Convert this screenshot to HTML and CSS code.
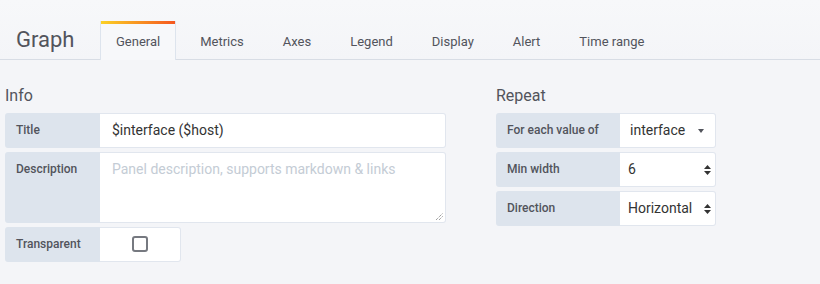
FILE: index.html
```html
<!DOCTYPE html>
<html lang="en">
<head>
    <meta charset="UTF-8">
    <title>Graph - General</title>
    <link rel="stylesheet" href="styles.css">
</head>
<body>
    <div class="edit-header">
        <div class="edit-title">Graph</div>
        <ul class="tabs">
            <li class="tab active">General</li>
            <li class="tab">Metrics</li>
            <li class="tab">Axes</li>
            <li class="tab">Legend</li>
            <li class="tab">Display</li>
            <li class="tab">Alert</li>
            <li class="tab">Time range</li>
        </ul>
    </div>

    <div class="edit-body">
        <div class="section info">
            <h5 class="section-heading">Info</h5>
            <div class="form-row">
                <label class="form-label">Title</label>
                <div class="form-input">$interface ($host)</div>
            </div>
            <div class="form-row">
                <label class="form-label">Description</label>
                <div class="form-input textarea">
                    <span class="placeholder">Panel description, supports markdown &amp; links</span>
                    <svg class="resize" width="8" height="8" viewBox="0 0 8 8">
                        <path d="M1 8 L8 1 M4 8 L8 4" stroke="#777" stroke-width="1" stroke-dasharray="1 1"/>
                    </svg>
                </div>
            </div>
            <div class="form-row">
                <label class="form-label">Transparent</label>
                <div class="form-input check-cell"><span class="checkbox"></span></div>
            </div>
        </div>

        <div class="section repeat">
            <h5 class="section-heading">Repeat</h5>
            <div class="form-row">
                <label class="form-label">For each value of</label>
                <div class="form-input select first">interface <span class="caret"></span></div>
            </div>
            <div class="form-row">
                <label class="form-label">Min width</label>
                <div class="form-input select spin">6
                    <svg class="updown" width="7" height="12" viewBox="0 0 7 12"><path d="M3.5 1 L7 5 L0 5 Z M0 7 L7 7 L3.5 11 Z" fill="#333"/></svg>
                </div>
            </div>
            <div class="form-row">
                <label class="form-label">Direction</label>
                <div class="form-input select spin">Horizontal
                    <svg class="updown" width="7" height="12" viewBox="0 0 7 12"><path d="M3.5 1 L7 5 L0 5 Z M0 7 L7 7 L3.5 11 Z" fill="#333"/></svg>
                </div>
            </div>
        </div>
    </div>
</body>
</html>
```

FILE: styles.css
```css
body {
    margin: 0;
    font-family: Roboto, "Liberation Sans", sans-serif;
    background-color: #f4f5f8;
    color: #52545c;
}

/* ヘッダー */
.edit-header {
    display: flex;
    align-items: flex-end;
    height: 59px;
    border-bottom: 1px solid #d8dde5;
    background: linear-gradient(#f7f8fa, #f4f5f8);
}

.edit-title {
    font-size: 22px;
    width: 101px;
    box-sizing: border-box;
    padding-left: 16px;
    line-height: 30px;
    margin-bottom: 4px;
}

.tabs {
    display: flex;
    gap: 9px;
    list-style: none;
    margin: 0;
    padding: 0;
}

.tab {
    font-size: 13px;
    padding: 0 15px;
    height: 35px;
    line-height: 41px;
    color: #52545c;
    box-sizing: border-box;
}

.tab.active {
    background: #f7f8fa;
    border-top: 3px solid transparent;
    border-image: linear-gradient(90deg, #fbd125, #f5571f) 1 0 0 0;
    height: 39px;
    line-height: 35px;
    margin-bottom: -1px;
    margin-right: 1px;
    padding: 0 15px;
    box-shadow: 1px 0 0 #dde4ed, -1px 0 0 #dde4ed;
}

/* フォーム */
.edit-body {
    display: flex;
    gap: 50px;
    padding: 27px 0 0 5px;
}

.info {
    width: 441px;
}

.repeat {
    width: 220px;
}

.section-heading {
    font-size: 16px;
    font-weight: 400;
    margin: 0 0 8px 0;
    line-height: 18px;
}

.form-row {
    display: flex;
    margin-bottom: 4px;
}

.form-label {
    background-color: #dde4ed;
    width: 95px;
    flex-shrink: 0;
    box-sizing: border-box;
    padding: 0 11px;
    font-size: 12px;
    font-weight: 500;
    line-height: 35px;
    height: 35px;
    border-radius: 3px 0 0 3px;
}

.repeat .form-label {
    width: 124px;
}

.form-input {
    flex-grow: 1;
    background: #fff;
    border: 1px solid #e1e6ee;
    border-left: none;
    border-radius: 0 3px 3px 0;
    height: 35px;
    box-sizing: border-box;
    padding: 0 12px;
    font-size: 14px;
    line-height: 33px;
    color: #333;
    position: relative;
}

.textarea {
    height: 71px;
}

.form-row:has(.textarea) .form-label {
    height: 71px;
}

.placeholder {
    color: #c4ccd5;
}

.resize {
    position: absolute;
    right: 2px;
    bottom: 2px;
}

.check-cell {
    flex-grow: 0;
    width: 81px;
    text-align: center;
}

.checkbox {
    display: inline-block;
    width: 12px;
    height: 12px;
    border: 2px solid #767980;
    border-radius: 3px;
    vertical-align: middle;
    margin-top: -3px;
}

.select {
    padding: 0 8px;
}

.select.first {
    padding-left: 10px;
}

.caret {
    position: absolute;
    right: 11px;
    top: 15px;
    border-left: 3.5px solid transparent;
    border-right: 3.5px solid transparent;
    border-top: 4px solid #52545c;
}

.updown {
    position: absolute;
    right: 4px;
    top: 11px;
}
```
